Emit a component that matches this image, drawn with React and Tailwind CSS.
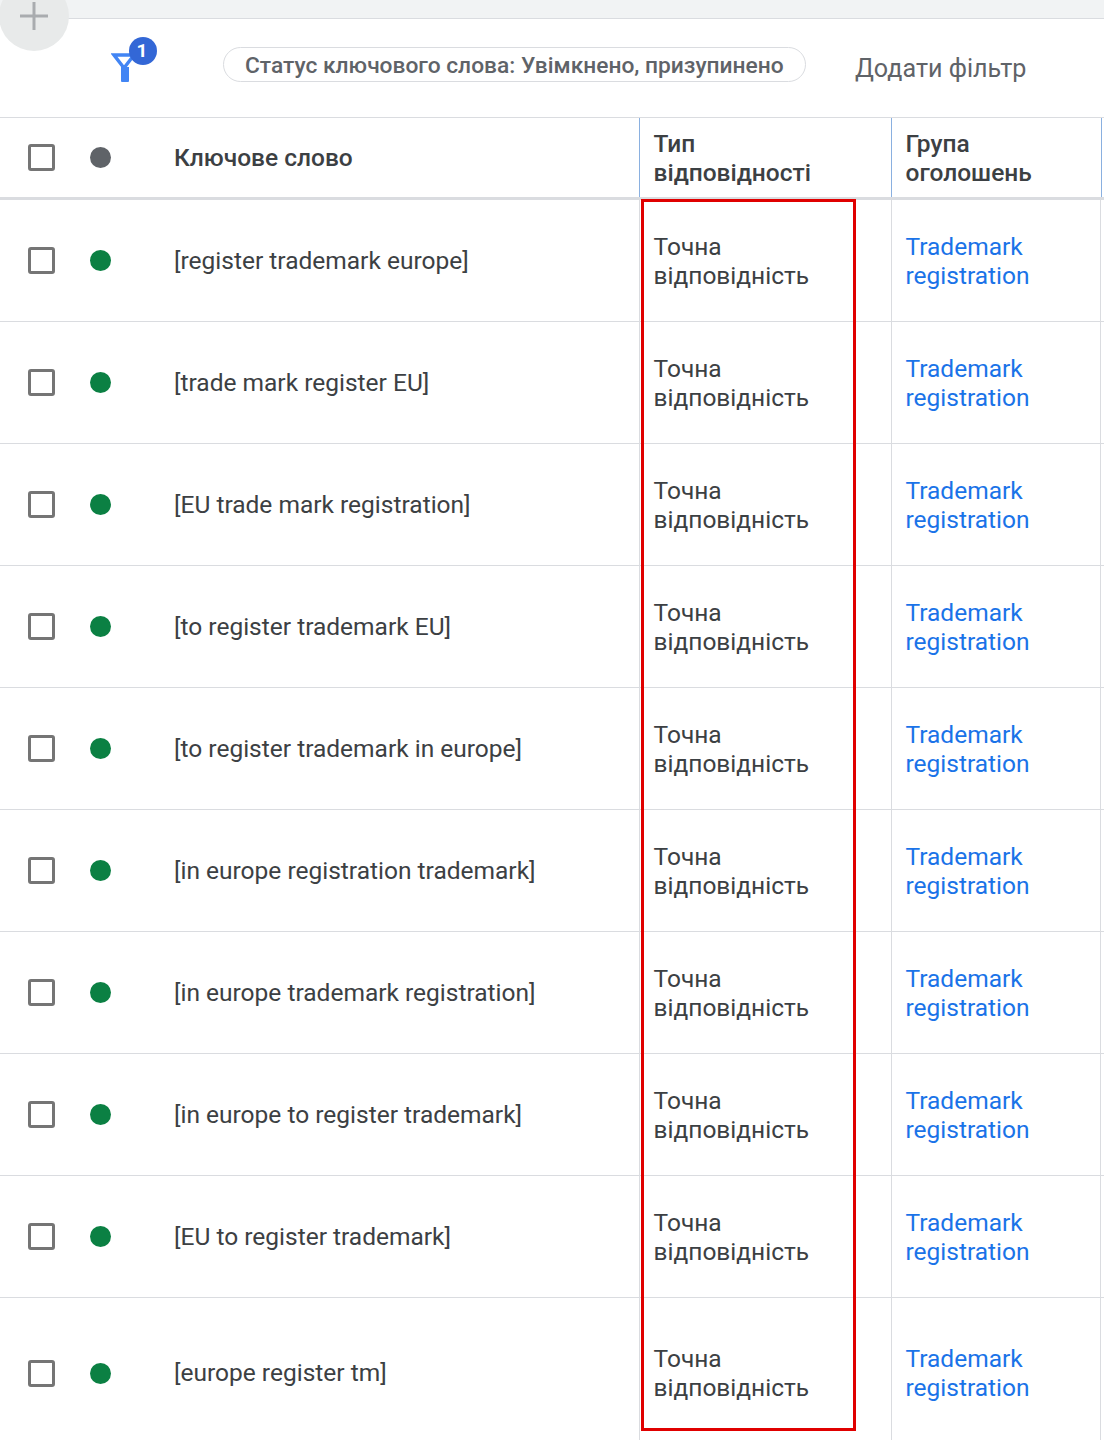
import React from 'react';

const KEYWORDS = [
  '[register trademark europe]',
  '[trade mark register EU]',
  '[EU trade mark registration]',
  '[to register trademark EU]',
  '[to register trademark in europe]',
  '[in europe registration trademark]',
  '[in europe trademark registration]',
  '[in europe to register trademark]',
  '[EU to register trademark]',
  '[europe register tm]',
];

const Checkbox = () => (
  <div className="w-[27px] h-[27px] border-[3px] border-[#757575] rounded-[3px] bg-white" />
);

const Row = ({ keyword, last }) => (
  <div className={`flex ${last ? 'h-[150px]' : 'h-[122px] border-b border-[#dadce0]'}`}>
    <div className="w-[639px] flex items-center">
      <div className="w-[90px] pl-[28px]">
        <Checkbox />
      </div>
      <div className="w-[84px]">
        <div className="w-[21px] h-[21px] rounded-full bg-[#0b8043]" />
      </div>
      <span className={`text-[#3c4043] ${last ? '' : 'pt-[2px]'}`}>{keyword}</span>
    </div>
    <div className="w-[252px] border-l border-[#dadce0] pl-[13.5px] flex items-center">
      <div className={`leading-[29px] text-[#3c4043] ${last ? 'pb-[1px]' : 'pt-[1px]'}`}>Точна<br />відповідність</div>
    </div>
    <div className="w-[210px] border-x border-[#dadce0] pl-[13.5px] flex items-center">
      <div className={`leading-[29px] text-[#1a73e8] ${last ? 'pb-[1px]' : 'pt-[1px]'}`}>Trademark<br />registration</div>
    </div>
  </div>
);

export default function App() {
  return (
    <div className="relative h-[1440px] w-[1104px] overflow-hidden bg-white font-['Roboto',sans-serif] text-[24.5px]">
      {/* Top strip */}
      <div className="h-[19px] bg-[#f1f3f4] border-b border-[#dadce0]" />
      <div className="absolute -left-[1px] -top-[19px] w-[70px] h-[70px] rounded-full bg-[#e8eaea] flex items-center justify-center">
        <svg width="30" height="30" viewBox="0 0 30 30">
          <path d="M15 1v28M1 15h28" stroke="#a9acaf" strokeWidth="3" />
        </svg>
      </div>

      {/* Filter bar */}
      <div className="h-[99px] border-b border-[#dadce0] flex items-center">
        <div className="relative w-[223px] h-full">
          <svg className="absolute left-[111px] top-[34px]" width="28" height="30" viewBox="0 0 28 30">
            <path d="M3 2h20L13 15z" fill="none" stroke="#4285f4" strokeWidth="3.4" />
            <path d="M10 14h8v14a1 1 0 0 1-1 1h-6a1 1 0 0 1-1-1z" fill="#4285f4" />
          </svg>
          <div className="absolute left-[129px] top-[18px] w-[28px] h-[28px] rounded-full bg-[#3367d6] text-white text-[19px] font-bold flex items-center justify-center pr-[2px]">1</div>
        </div>
        <div className="w-[583px] h-[35px] mt-[-7px] border border-[#dadce0] rounded-full pl-[21px] pt-[3px] flex items-center text-[22.76px] font-medium text-[#5f6368] whitespace-nowrap">
          Статус ключового слова: Увімкнено, призупинено
        </div>
        <div className="ml-[49px] mt-[2px] text-[25.1px] text-[#5f6368]">Додати фільтр</div>
      </div>

      {/* Table header */}
      <div className="flex h-[82px] border-b-[3px] border-[#dadce0] font-medium text-[#3c4043]">
        <div className="w-[639px] flex items-center">
          <div className="w-[90px] pl-[28px]">
            <Checkbox />
          </div>
          <div className="w-[84px]">
            <div className="w-[21px] h-[21px] rounded-full bg-[#5f6368]" />
          </div>
          <span className="pt-[2px]">Ключове слово</span>
        </div>
        <div className="w-[252px] border-l border-[#8ab0e0] pl-[13.5px] flex items-center leading-[29px]">
          <div className="pt-[1px]">Тип<br />відповідності</div>
        </div>
        <div className="w-[211px] border-x border-[#8ab0e0] pl-[13.5px] flex items-center leading-[29px]">
          <div className="pt-[1px]">Група<br />оголошень</div>
        </div>
      </div>

      {KEYWORDS.map((k, i) => (
        <Row key={k} keyword={k} last={i === KEYWORDS.length - 1} />
      ))}

      {/* Red highlight */}
      <div className="absolute left-[641px] top-[199px] w-[215px] h-[1232px] border-[3px] border-[#e00000]" />
    </div>
  );
}
